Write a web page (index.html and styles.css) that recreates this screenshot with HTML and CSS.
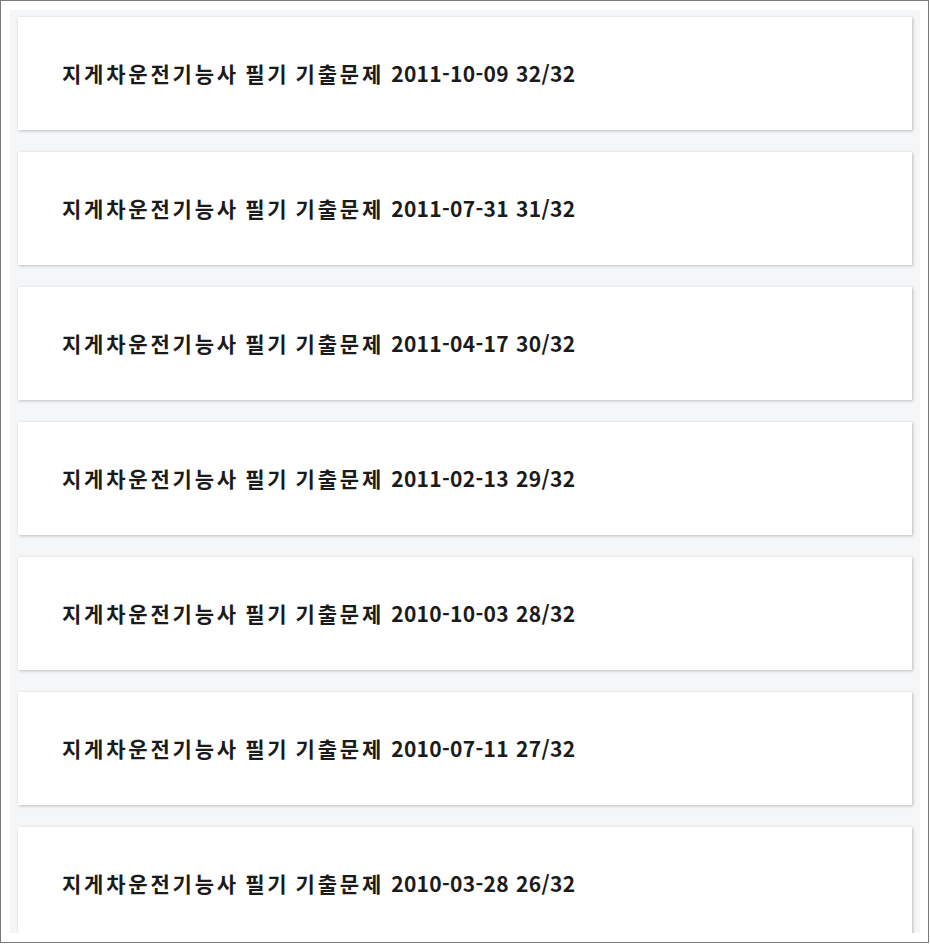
FILE: index.html
```html
<!DOCTYPE html>
<html lang="ko">
<head>
<meta charset="utf-8">
<link rel="stylesheet" href="styles.css">
</head>
<body>
<div class="frame">
  <div class="list">
    <div class="card"><span class="title"><span class="ko">지게차운전기능사 필기 기출문제</span> 2011-10-09 32/32</span></div>
    <div class="card"><span class="title"><span class="ko">지게차운전기능사 필기 기출문제</span> 2011-07-31 31/32</span></div>
    <div class="card"><span class="title"><span class="ko">지게차운전기능사 필기 기출문제</span> 2011-04-17 30/32</span></div>
    <div class="card"><span class="title"><span class="ko">지게차운전기능사 필기 기출문제</span> 2011-02-13 29/32</span></div>
    <div class="card"><span class="title"><span class="ko">지게차운전기능사 필기 기출문제</span> 2010-10-03 28/32</span></div>
    <div class="card"><span class="title"><span class="ko">지게차운전기능사 필기 기출문제</span> 2010-07-11 27/32</span></div>
    <div class="card"><span class="title"><span class="ko">지게차운전기능사 필기 기출문제</span> 2010-03-28 26/32</span></div>
  </div>
</div>
</body>
</html>
```

FILE: styles.css
```css
html, body {
  margin: 0;
  padding: 0;
  background: #ffffff;
}
.frame {
  box-sizing: border-box;
  width: 929px;
  height: 943px;
  border: 1px solid #7a7a7a;
  padding: 9px 8px 9px 9px;
  background: #ffffff;
}
.list {
  box-sizing: border-box;
  width: 910px;
  height: 923px;
  overflow: hidden;
  background: #f5f6f8;
  padding: 7px 8px 0 8px;
  display: flex;
  flex-direction: column;
  gap: 22px;
}
.card {
  flex: 0 0 auto;
  box-sizing: border-box;
  height: 113px;
  background: #ffffff;
  box-shadow: 1px 1px 3px rgba(0, 0, 0, 0.22), 0 0 1px rgba(0, 0, 0, 0.08);
  display: flex;
  align-items: center;
  padding-left: 44px;
}
.title {
  font-family: "Noto Sans CJK KR", "Noto Sans", sans-serif;
  font-weight: 700;
  font-size: 21px;
  line-height: 1;
  color: #1b1b1b;
  white-space: nowrap;
  word-spacing: 1px;
  letter-spacing: 0.3px;
}
.ko {
  letter-spacing: 2.8px;
  word-spacing: -2.5px;
}
```
